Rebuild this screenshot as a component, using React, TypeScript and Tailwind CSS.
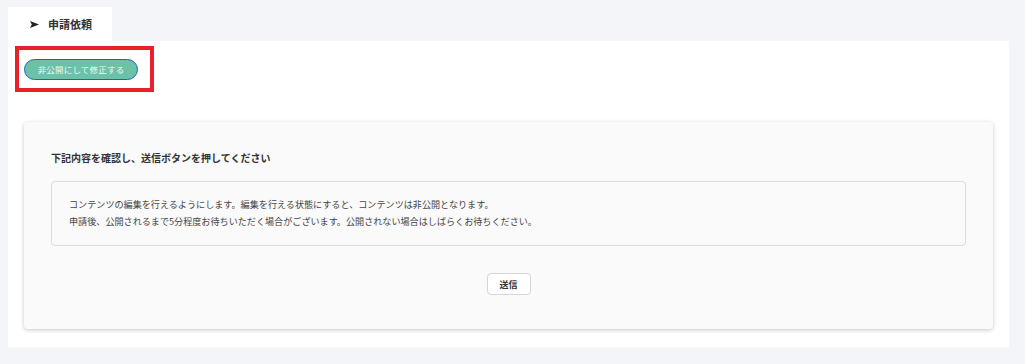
import React from "react";

export default function App() {
  const font = { fontFamily: '"Noto Sans CJK JP", "Noto Sans", sans-serif' };
  return (
    <div className="h-[364px] w-[1025px] bg-[#f4f5f9] pt-[7px] pl-2 pr-4 text-[#333]" style={font}>
      <div className="flex h-[34px] w-[104px] items-center bg-white pl-[22px]">
        <svg width="9" height="7" viewBox="0 0 9 7" className="mr-[9px] text-[#222]">
          <path d="M0 0 L9 3.5 L0 7 L1.8 3.5 Z" fill="currentColor" />
        </svg>
        <span className="text-[11px] font-bold leading-none">申請依頼</span>
      </div>
      <div className="flex h-[306px] flex-col bg-white pt-[5px] pl-[7px] pr-4">
        <div className="h-[46px] w-[139px] border-4 border-[#e8202a] pt-[9px] pl-[5px]">
          <button className="flex h-[21px] w-[114px] items-center justify-center rounded-full border-[1.5px] border-[#1f62c8] bg-[#6cc2a7] text-[8.5px] leading-none tracking-[0.2px] text-[#f2f7f5]">
            非公開にして修正する
          </button>
        </div>
        <div className="ml-[9px] mt-[30px] flex h-[207px] flex-col rounded-[4px] bg-[#fafafa] px-[27px] pt-[28px] shadow-[0_1px_4px_rgba(0,0,0,0.22)]">
          <div className="text-[10px] font-bold leading-[15px] text-[#333]">
            下記内容を確認し、送信ボタンを押してください
          </div>
          <div className="mt-[16px] h-[65px] rounded-[4px] border border-[#dcdcdc] bg-[#fafafa] pl-[17px] pt-[14px] text-[9.1px] leading-[17px] text-[#444]">
            <div>コンテンツの編集を行えるようにします。編集を行える状態にすると、コンテンツは非公開となります。</div>
            <div>申請後、公開されるまで5分程度お待ちいただく場合がございます。公開されない場合はしばらくお待ちください。</div>
          </div>
          <div className="mt-[27px] flex justify-center">
            <button className="flex h-[22px] w-[44px] items-center justify-center rounded-[4px] border border-[#d6d6d6] bg-white text-[9px] font-bold leading-none text-[#333]">
              送信
            </button>
          </div>
        </div>
      </div>
    </div>
  );
}
